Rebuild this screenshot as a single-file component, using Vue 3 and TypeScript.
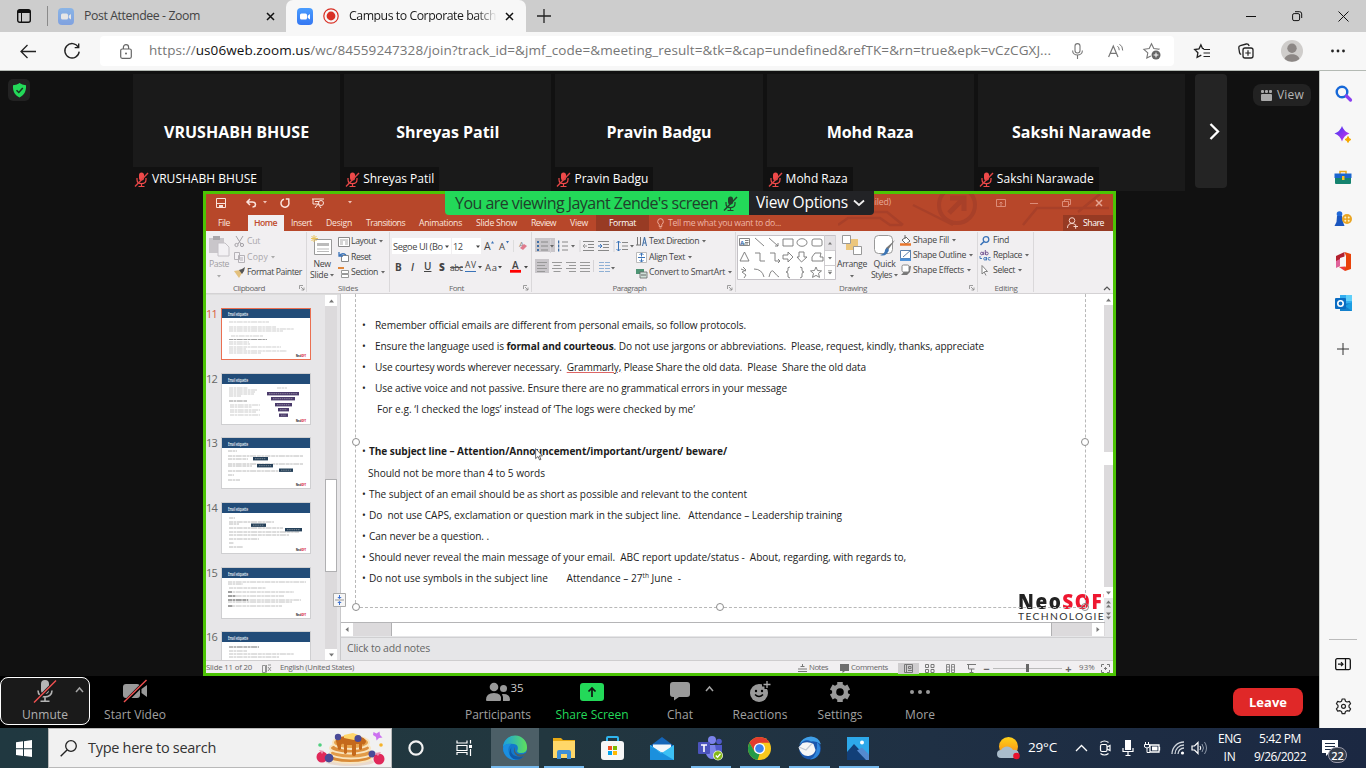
<script setup lang="ts">
import { h } from 'vue'

/* Spreads the characters of a label so that it takes exactly the given width. */
const vFit = {
  mounted(el: HTMLElement, binding: { value: number }) {
    el.style.display = 'inline-block'
    el.style.flex = 'none'
    el.style.whiteSpace = 'pre'
    el.style.width = 'max-content'
    const natural = el.getBoundingClientRect().width
    const count = (el.textContent || '').length || 1
    el.style.letterSpacing = (binding.value - natural) / count + 'px'
    el.style.width = binding.value + 'px'
  },
}

const lines = (rows: number[][], color = '#8d9197', sw = 1) =>
  rows.map(([x, y, w]) => `<path d="M${x} ${y}h${w}" stroke="${color}" stroke-width="${sw}"/>`).join('')

const micOff = (c: string, s: string) =>
  `<g transform="scale(.5)"><rect x="10" y="1" width="10" height="16" rx="5" fill="${c}"/><path d="M6 12v3c0 11 18 11 18 0v-3M15 23v6M9 29h12" fill="none" stroke="${c}" stroke-width="2.4"/><path d="M2 29L28 2" stroke="${s}" stroke-width="2.8"/></g>`

const icons: Record<string, string> = {
  tabs: '<rect x="1.7" y="1.7" width="12.6" height="12.6" rx="2" fill="none" stroke="#111" stroke-width="1.4"/><path d="M2 2h12v3H2z" fill="#111"/><path d="M5.5 4v10" stroke="#111"/>',
  zoomapp: '<defs><linearGradient id="za" x2="0" y2="1"><stop stop-color="#4a9dff"/><stop offset="1" stop-color="#3577f2"/></linearGradient></defs><rect width="16" height="17" rx="4" fill="url(#za)"/><rect x="3" y="5.5" width="7" height="6" rx="1.5" fill="#fff"/><path d="M10.7 7.8L13 6v5.5l-2.3-1.7z" fill="#fff"/>',
  rec: '<circle cx="8" cy="8" r="7.2" fill="none" stroke="#d93025" stroke-width="1.2"/><circle cx="8" cy="8" r="4.4" fill="#d93025"/>',
  x: '<path d="M1 1l7 7M8 1l-7 7" stroke="#111" stroke-width="1.5"/>',
  plus: '<path d="M7 0v14M0 7h14" stroke="#222" stroke-width="1.3"/>',
  min: '<path d="M0 5.5h10" stroke="#111"/>',
  restore: '<rect x=".6" y="2.6" width="7" height="7" rx="1.5" fill="none" stroke="#111"/><path d="M3 .7h4.5q2.2 0 2.2 2.2V7" fill="none" stroke="#111"/>',
  close: '<path d="M.5.5l10 10M10.5.5l-10 10" stroke="#111"/>',
  back: '<path d="M16 7.5H1M7.5 1L1 7.5 7.5 14" fill="none" stroke="#222" stroke-width="1.3"/>',
  reload: '<path d="M14.3 4.2A7.2 7.2 0 1 0 15.2 8.6M14.7.6v4h-4" fill="none" stroke="#222" stroke-width="1.4"/>',
  lock: '<rect x=".7" y="5" width="10.6" height="9.3" rx="1.5" fill="none" stroke="#666" stroke-width="1.2"/><path d="M3.4 5V3.2a2.6 2.6 0 0 1 5.2 0V5" fill="none" stroke="#666" stroke-width="1.2"/><circle cx="6" cy="9.6" r="1" fill="#666"/>',
  mic: '<rect x="3" y=".6" width="5" height="9.4" rx="2.5" fill="none" stroke="#767676" stroke-width="1.1"/><path d="M.6 7.5c0 6 9.8 6 9.8 0M5.500 12v4" fill="none" stroke="#767676" stroke-width="1.1"/>',
  read: '<path d="M.6 14L5.3 3 10 14M2.3 10.4h6" fill="none" stroke="#767676" stroke-width="1.2"/><path d="M9.5 3.2q1.8 1.3 1.7 4M11.5 1.2q3.3 2 3.2 6.3" fill="none" stroke="#767676"/>',
  star: '<path d="M15.5 6.700L16 6.100 10.800 5.600 8.500.800 6.200 5.600.900 6.300l3.900 3.600-1 5.200 4-2.100" fill="none" stroke="#767676" stroke-width="1.100"/><circle cx="13" cy="12" r="4.500" fill="#666"/><path d="M13 9.600v4.800M10.600 12h4.800" stroke="#fff"/>',
  favs: '<path d="M10 4.6l-1.500-.2L6.900.9 5 4.900l-4.300.6L3.900 8.700l-.8 4.700 4.200-2.200" fill="none" stroke="#222" stroke-width="1.3"/><path d="M9.500 5.500H16M9.500 9H16M9.500 12.500H16" stroke="#222" stroke-width="1.2"/>',
  collect: '<rect x="5" y="5" width="10" height="10" rx="2" fill="none" stroke="#222" stroke-width="1.3"/><path d="M10 7.3v5.4M7.3 10h5.4" stroke="#222" stroke-width="1.2"/><path d="M3.2 11.5Q1.8 11 1.5 9.500L.8 4.800Q.6 3 2.300 2.600L8.300 1q2-.4 2.900 2" fill="none" stroke="#222" stroke-width="1.3"/>',
  avatar: '<circle cx="11" cy="11" r="11" fill="#cfcdcb"/><circle cx="11" cy="8.3" r="4.7" fill="#8c8785"/><path d="M3.6 19c1-6.500 14-6.500 14.800 0a11 11 0 0 1-14.800 0" fill="#8c8785"/>',
  dots: '<circle cx="1.5" cy="2" r="1.4" fill="#222"/><circle cx="7" cy="2" r="1.4" fill="#222"/><circle cx="12.5" cy="2" r="1.4" fill="#222"/>',
  shield: '<path d="M6.5 0Q9 2 13 2.3C13.4 8.500 11 12.500 6.500 14.500 2 12.500-.4 8.500 0 2.300 4 2 6.500 0 6.500 0" fill="#23d959"/><path d="M3.5 7.2l2.3 2.3L9.8 5" fill="none" stroke="#17331f" stroke-width="1.5"/>',
  view: '<g fill="#a9a9a9"><rect y="0" width="3" height="3" rx="1"/><rect x="4" width="3" height="3" rx="1"/><rect x="8" width="3" height="3" rx="1"/><rect y="4" width="11" height="7" rx="1"/></g>',
  next: '<path d="M1.5 1l7.500 7.500L1.500 16" fill="none" stroke="#fff" stroke-width="2.3"/>',
  micred: micOff('#f04a4a', '#e04545'),
  micgreen: micOff('#24402c', '#24402c'),
  chev: '<path d="M1 1.500l5 4.500 5-4.500" fill="none" stroke="#eee" stroke-width="1.8"/>',
  /* Edge sidebar */
  search: '<circle cx="7" cy="7" r="5.3" fill="none" stroke="#1668d8" stroke-width="2.4"/><path d="M11.500 11l4 4" stroke="#8a3ff0" stroke-width="3.2" stroke-linecap="round"/>',
  spark: '<defs><linearGradient id="sp" x2="1" y2="1"><stop stop-color="#3b3bf0"/><stop offset="1" stop-color="#d733f0"/></linearGradient></defs><path d="M8 0q1.700 5.300 7.500 7.500Q9.700 9.700 8 15.500 6.300 9.700.500 7.500 6.300 5.300 8 0" fill="url(#sp)"/><path d="M14 10.500q.7 2.700 3 3-2.300.7-3 3-.7-2.300-3-3 2.300-.3 3-3" fill="#f5a900" stroke="#f5a900"/>',
  tools: '<path d="M6 4V1.500h6V4" fill="none" stroke="#e5a71c" stroke-width="1.5"/><rect x="1" y="6" width="16" height="8" rx="1" fill="#15836f"/><path d="M.5 3.500h17V8H.5z" fill="#1a65cf"/><path d="M8 6h2.500v4H8z" fill="#f6c326"/>',
  games: '<circle cx="5.5" cy="3" r="2.8" fill="#2168d8"/><path d="M3 5h5l1 6 1.500 4H.5L2.500 11z" fill="#1a56bf"/><circle cx="13" cy="8" r="5" fill="#e9a524"/><g fill="#fff3c4"><circle cx="11.3" cy="6.5" r="1"/><circle cx="14.7" cy="6.5" r="1"/><circle cx="11.3" cy="9.7" r="1"/><circle cx="14.7" cy="9.7" r="1"/></g>',
  office: '<path d="M9.5 0L16 2v15l-6 2v-3.500L11 14V4z" fill="#e8430a"/><path d="M9.5 0v4.500L5 6v8L1 15V4z" fill="#b3202e"/><path d="M1 9l4-2v7l-4 2z" fill="#e0629a"/><path d="M4 15l6-.5V19z" fill="#ed3a3a"/>',
  outlook: '<path d="M5 0h12v16H5z" fill="#33aef0"/><path d="M11 0h6v6h-6z" fill="#5fd0fa"/><path d="M5 9l12-1v8H5z" fill="#1380cc"/><path d="M10 11l7-4v9z" fill="#1b9de2"/><rect y="3" width="11" height="11" rx="1" fill="#0a6cc2"/><circle cx="5.5" cy="8.5" r="2.7" fill="none" stroke="#fff" stroke-width="1.6"/>',
  plus2: '<path d="M6 0v12M0 6h12" stroke="#333"/>',
  panel: '<rect x=".7" y=".7" width="14.6" height="11" rx="1.5" fill="none" stroke="#111" stroke-width="1.3"/><path d="M10.500 1v11M3 6.200h5M6 4.200l2 2-2 2" fill="none" stroke="#111" stroke-width="1.2"/>',
  gear: '<path d="M7.2 1h2.600l.7 2.200 1.500.8 2.300-.6 1.300 2.300L14 7.400v1.800l1.600 1.700-1.300 2.300-2.300-.5-1.500.8-.7 2.200H7.200l-.7-2.200-1.500-.8-2.300.5-1.300-2.300L3 9.200V7.400L1.400 5.700l1.300-2.300 2.300.6 1.500-.8z" fill="none" stroke="#222" stroke-width="1.2" stroke-linejoin="round"/><circle cx="8.5" cy="8.3" r="2" fill="none" stroke="#222" stroke-width="1.2"/>',
  /* PowerPoint */
  save: '<path d="M.5.5h9v9h-9z" fill="none" stroke="#fbe3dc"/><path d="M1 5.500h8" stroke="#fbe3dc"/><path d="M3 7h4v3H3z" fill="#fbe3dc"/>',
  undo: '<path d="M4 1L1 4l3 3M1 4h5.500q3 0 3 2.500T6.500 9" fill="none" stroke="#fbe3dc" stroke-width="1.5"/>',
  redo: '<path d="M4 1.300A4 4 0 1 0 8.800 4V.500M9.300 1H5.800" fill="none" stroke="#fbe3dc" stroke-width="1.5"/>',
  present: '<path d="M0 1h12M1 1v5h6M6 6l-3 4M6 6l3 4M3 3.500h4" fill="none" stroke="#fbe3dc"/><circle cx="9" cy="5" r="2.5" fill="none" stroke="#fbe3dc"/>',
  caretw: '<path d="M0 0h4L2 2.500z" fill="#f0c3b7"/>',
  caret: '<path d="M0 0h4L2 2.500z" fill="#666"/>',
  caretl: '<path d="M0 0h4L2 2.500z" fill="#aaa"/>',
  circuit: '<g fill="none" stroke="#a84029" stroke-width="3"><circle cx="119" cy="11" r="18" stroke-width="4"/><path d="M111 19l15-15M112 4h14v13" stroke-width="5"/><path d="M0 31l10-7h32l10 7h12M25 18h24l16 13M75 11l40 20M185 31l14-17h72M240 18l22-18" stroke-width="2.500"/></g>',
  ribbonopt: '<path d="M.5.5h9v7h-9zM5 7V3M3.500 4.500L5 3l1.500 1.500" fill="none" stroke="#dc8c78"/>',
  wmin: '<path d="M0 4.500h8" stroke="#dc8c78"/>',
  wres: '<path d="M.5 2.500h6v5h-6zM2.500 2V.5h6v5H7" fill="none" stroke="#dc8c78"/>',
  wclose: '<path d="M1 1l6 6M7 1L1 7" stroke="#e5a594" stroke-width="1.5"/>',
  bulb: '<path d="M2.200 6.500Q.5 5 .7 3.500a2.800 2.800 0 0 1 5.600 0Q6.500 5 4.800 6.500v2H2.200zM2.500 10h2" fill="none" stroke="#f0b3a4" stroke-width=".9"/>',
  person: '<circle cx="5" cy="3.5" r="2.8" fill="none" stroke="#f5d5cc"/><path d="M.5 11q0-4.500 4.500-4.500 2 0 3 1M6.500 9.500H11M8.700 7.300v4.500" fill="none" stroke="#f5d5cc"/>',
  paste: '<path d="M1 3h15v15H1z" fill="#c9c6ca"/><path d="M5 1h7v4H5z" fill="#aaa7ab"/><path d="M10 8h7l4 4v9H10z" fill="#f3f1f4" stroke="#c4c1c6"/>',
  cut: '<path d="M2 0l5 8M9 0L4 8" stroke="#a5a2a7"/><circle cx="2.5" cy="9" r="1.6" fill="none" stroke="#a5a2a7"/><circle cx="8" cy="9" r="1.6" fill="none" stroke="#a5a2a7"/>',
  copy: '<path d="M.5.5h5v7h-5zM4.500 3.500h6v7h-6z" fill="#f3f1f4" stroke="#b5b2b7"/><path d="M6 6h3M6 8h3" stroke="#b5b2b7"/>',
  painter: '<path d="M0 4l6-1 2 3-3 5z" fill="#e3c07d"/><path d="M5 3l3 4 2-3L11 0 8 2z" fill="#555"/>',
  newslide: '<path d="M3.500 4.500h17v15h-17z" fill="#fff" stroke="#999"/><path d="M6 8h12v3H6z" fill="#bbb"/><path d="M6 14h12M6 16.500h12" stroke="#bbb"/><path d="M3 0v7M0 3.500h7M.5 1l5 5M5.500 1l-5 5" stroke="#e9c25c"/>',
  layout: '<path d="M.5.5h11v9H.5z" fill="#fff" stroke="#888"/><path d="M2 3h8M2 5h3M7 5h3M2 7h3M7 7h3" stroke="#aaa"/>',
  reset: '<path d="M3.500 3.500h7v6h-7z" fill="#fff" stroke="#888"/><path d="M1 0v4h4M1 4Q4 0 8 3" fill="none" stroke="#3a73b8" stroke-width="1.3"/>',
  section: '<path d="M0 1h6" stroke="#e0873b" stroke-width="2"/><path d="M3.500 3.500h7v3h-7zM3.500 7.500h7v3h-7z" fill="#fff" stroke="#999"/>',
  launch: '<path d="M.5 4V.5H4M2 2l3 3M5 2.500V5H2.500" fill="none" stroke="#888" stroke-width=".8"/>',
  textdir: '<path d="M1.500 1v8M4.500 1v8M0 9h5" stroke="#777"/><path d="M6.500 10l2-9 2 9M7.500 7h2" fill="none" stroke="#4673a8" stroke-width="1.1"/>',
  aligntext: '<path d="M.5.5h10v10H.5z" fill="#fff" stroke="#bbb"/><path d="M5.500 1v3.500M5.500 6.500V10M3.500 3l2-2 2 2M3.500 8l2 2 2-2M2 5.500h7" fill="none" stroke="#3a73b8"/>',
  smart: '<path d="M0 1h8v5H0z" fill="#4e9474"/><path d="M4 4h7v6H4z" fill="#cfe0d8" stroke="#666" stroke-width=".8"/><path d="M5 7h5" stroke="#666"/>',
  arrange: '<path d="M9 4h7v7h-4v4H4V9h5z" fill="#ecc67c"/><path d="M.5.500h8v8h-8zM11.500 11.500h8v8h-8z" fill="#fff" stroke="#999"/>',
  quick: '<rect x=".5" y=".5" width="18" height="18" rx="4" fill="#fff" stroke="#999"/><path d="M21 5l-7 10-3 1 1-3z" fill="#777"/><path d="M13 13q3 1 1 4-3 5-8 3 5-1 5-5z" fill="#3c75b5"/>',
  fill: '<path d="M5 0v4M2 5l4-3 4 4-4 3z" fill="#fff" stroke="#666"/><path d="M0 9.500h11" stroke="#e8772e" stroke-width="2.5"/>',
  outline: '<path d="M.5.5h10v8H.5zM3 7l8-7" fill="#fff" stroke="#5a80ad"/><path d="M0 9.700h11" stroke="#4a90d9" stroke-width="2.5"/>',
  effects: '<path d="M3 8L4 2l7-1-1 6-3 3H1z" fill="#777"/><rect x="2" y="0" width="7" height="7" rx="1.5" fill="#fff" stroke="#888"/>',
  find: '<circle cx="6" cy="3.5" r="2.8" fill="none" stroke="#3a73b8" stroke-width="1.3"/><path d="M4 5.500L.5 9" stroke="#3a73b8" stroke-width="1.6"/>',
  replace: '<g fill="none" stroke-width=".9"><g stroke="#6b4a8a"><circle cx="1.800" cy="3.500" r="1.300"/><path d="M3.300 1.800V5M5.300 0v5"/><circle cx="6.800" cy="3.500" r="1.400"/></g><g stroke="#3a73b8"><circle cx="5" cy="8.800" r="1.300"/><path d="M6.500 7v3.400M10.500 7.500q-2.500-.500-2.500 1.300t2.500 1.300M0 6v2.500h2"/></g></g>',
  select: '<path d="M2 .5v8.500l2.200-2L6 10.500M2 .5l5.500 6H4.500" fill="#fff" stroke="#777" stroke-width=".9"/>',
  up: '<path d="M0 3.500h5L2.500.5z" fill="#777"/>',
  down: '<path d="M0 .5h5L2.500 3.500z" fill="#777"/>',
  left: '<path d="M3.500 0v5L.5 2.500z" fill="#777"/>',
  right: '<path d="M.5 0v5l3-2.500z" fill="#777"/>',
  pgup: '<path d="M0 3.500h5L2.500.5zM0 7.500h5L2.500 4.500z" fill="#777"/>',
  pgdn: '<path d="M0 .5h5L2.500 3.500zM0 4.500h5L2.500 7.500z" fill="#777"/>',
  collapse: '<path d="M0 4l3-3 3 3" fill="none" stroke="#555" stroke-width="1.2"/>',
  split: '<path d="M.5.5h12v13H.5z" fill="#f6f6f6" stroke="#aaa"/><path d="M2 7h9" stroke="#999"/><path d="M6.500 2v3M6.500 12V9" stroke="#3a6fd0"/><path d="M4.300 4h4.400L6.500 6zM4.300 10h4.400L6.500 8z" fill="#3a6fd0"/>',
  pointer: '<path d="M.6.6v10l2.400-2.100L4.600 12l1.300-.6-1.500-3.500h3.100z" fill="#fff" stroke="#444" stroke-width=".8"/>',
  spell: '<path d="M.5 1.500h3v7h-3zM4.500 8.500V1M6 3l3 4M9 3L6 7M6 1h3" fill="none" stroke="#888" stroke-width=".9"/>',
  notes: '<path d="M0 7.500h9M0 5h9M2.500 2.500h4M4.500 0v2" stroke="#777"/>',
  comment: '<path d="M0 0h9v7H5L2.500 9V7H0z" fill="#6f6f6f"/>',
  normal: '<path d="M.5.5h8v8h-8zM2.500 1v8M4.500 2.500h2.500v2H4.500zM4 6.500h4" fill="none" stroke="#777"/>',
  sorter: '<path d="M.5.5h3v3h-3zM6 .5h3v3H6zM.5 5.500h3v3h-3zM6 5.500h3v3H6z" fill="none" stroke="#777"/>',
  reading: '<path d="M.5.5h3v8h-3zM5.500.5h3v8h-3zM1 3h3M5 3h3M1 6h3M5 6h3" fill="none" stroke="#888"/>',
  show: '<path d="M0 .5h9M1.500 1v4h6M4.500 5v3.500M2.500 8.500h4" fill="none" stroke="#777"/>',
  fitwin: '<path d="M.5 3V.5H3M6 .5h2.500V3M8.500 6v2.500H6M3 8.500H.5V6M3 4.500h3M4.500 3v3" fill="none" stroke="#777"/>',
  fontrows:
    '<g font-family="Open Sans" fill="#444"><rect x="2" y="7" width="59" height="16" fill="#fff"/><rect x="62" y="7" width="29" height="16" fill="#fff"/>' +
    '<text x="3" y="18.6" font-size="9.2" textLength="50">Segoe UI (Bo</text><path d="M55 14.500h4l-2 2.500zM86 14.500h4l-2 2.500z"/><text x="63" y="18.6" font-size="9.2" textLength="10">12</text>' +
    '<text x="94" y="19" font-size="10.5">A</text><path d="M101 12.500l1.500-2.500 1.500 2.500z" fill="#3a73b8"/><text x="109" y="19" font-size="9.5">A</text><path d="M116 10h3l-1.500 2.500z" fill="#3a73b8"/><path d="M123.500 9v12" stroke="#ddd"/><text x="129" y="16" font-size="8" fill="#888">A</text><path d="M130 17l4-4 3 2-4 4z" fill="#e07a8c"/>' +
    '<text x="5" y="39.5" font-size="10" font-weight="700">B</text><text x="21" y="39.5" font-size="10" font-style="italic" font-weight="600">I</text><text x="34" y="39" font-size="10" text-decoration="underline" font-weight="600">U</text><text x="49" y="39.5" font-size="10" font-weight="800">S</text><text x="60" y="39.5" font-size="8.5" textLength="13" text-decoration="line-through">abc</text><text x="75" y="37" font-size="8.5" textLength="11">AV</text><path d="M75 40.500h11" stroke="#3a73b8"/><path d="M88 35h4l-2 2.500z"/><text x="95" y="39.5" font-size="9.5" textLength="12">Aa</text><path d="M108 35h4l-2 2.500z"/><text x="122" y="38" font-size="10" font-weight="600">A</text><path d="M120 40.300h11" stroke="#f00" stroke-width="2.8"/><path d="M134 35h4l-2 2.500z"/></g>',
  pararows:
    '<path d="M3 7h20v14H3zM3 28h14v14H3z" fill="#c9c6ca"/><path d="M18.500 8v14M48 9v12M82 9v12M61.500 29v12" stroke="#d5d3d6"/>' +
    '<g fill="#3f6ea6"><path d="M5 10h2v2H5zM5 14h2v2H5zM5 18h2v2H5zM26 9.500h1.300v3H26zM26 13.500h1.300v3H26zM26 17.500h1.300v3H26z"/></g>' +
    lines([[9, 11, 7], [9, 15, 7], [9, 19, 7], [30, 11, 6], [30, 15, 6], [30, 19, 6], [51, 10.5, 11], [56, 13.5, 6], [56, 16.5, 6], [51, 19.5, 11], [66, 10.5, 11], [71, 13.5, 6], [71, 16.5, 6], [66, 19.5, 11], [90, 11.5, 6], [90, 15, 6], [90, 18.5, 6]], '#888') +
    '<path d="M55 15h-4M53 13l-2 2 2 2" fill="none" stroke="#999"/><path d="M66 15h4M68 13l2 2-2 2M86.500 10v10M84.500 12l2-2 2 2M84.500 18l2 2 2-2" fill="none" stroke="#3a73b8"/>' +
    '<g fill="#666"><path d="M18 14h4l-2 2.500zM39 14h4l-2 2.500zM98 14h4l-2 2.500zM79 36h4l-2 2.500z"/></g>' +
    [31.5, 34.5, 37.5, 40.5].map((y, i) => lines([[5, y, i % 2 ? 8 : 10], [i % 2 ? 21.5 : 20, y, i % 2 ? 7 : 10], [i % 2 ? 37 : 34, y, i % 2 ? 7 : 10], [48, y, 10]], '#999') + lines([[67, y, 5], [73, y, 5]], '#8fb0d4')).join(''),
  shapes:
    '<path d="M.5.5h98v44h-98z" fill="#fff" stroke="#c4c1c6"/><path d="M88 1h10.500v14H88z" fill="#e4e2e5"/><path d="M87.500 0v45M87.500 15.500h11M87.500 30.500h11" stroke="#cfcdd0"/><g fill="#777"><path d="M91 9.500h4l-2-2.500zM91 22h4l-2 2.500zM91 37h4l-2 2.500zM91 35.500h4v.8h-4z"/></g>' +
    '<g fill="none" stroke="#777" stroke-width=".9"><path d="M2.500 3.500h10v7h-10zM8 5.500h3.500M8 7.500h3.500M4 9h7M18 3l9 8M32 3l9 8M41 8v3h-3M46 4h10v7H46zM75 6q0-2 2-2h6q2 0 2 2v4q0 1-2 1h-6q-2 0-2-1zM3 26l4.500-9 4.500 9zM18 18h5v8h5M33 18h5v8h5M41 24l2 2-2 2M46 20h5v-3l5 5-5 5v-3h-5zM62 17h5v5h3l-5.500 5L60 22h2zM75 22l3-4h6l-1 4h3v4H75zM6 32l3 3-4 2 4 3-2 3M4 34l5 2M17 34q8 0 10 8M32 42q2-9 5-5t5 5M53 32q-3 0-2 3 0 2-2 2 2 0 2 2-1 4 2 4M63 32q3 0 2 3 0 2 2 2-2 0-2 2 1 4-2 4M79 32l1.500 3.500 4 .4-3 2.500 1 4-3.500-2-3.500 2 1-4-3-2.500 4-.4z"/><ellipse cx="65" cy="7.5" rx="5" ry="3.8"/></g><text x="3" y="9.5" font-size="6" fill="#3a73b8" font-weight="700">A</text>',
  /* Zoom controls */
  zmic: '<rect x="8" y="0" width="8" height="14" rx="4" fill="#b5b5b5"/><path d="M5 10.500c0 8.500 14 8.500 14 0M12 17v4M7.500 21.300h9" fill="none" stroke="#b5b5b5" stroke-width="1.6"/><path d="M1 23L23 1" stroke="#1a1a1a" stroke-width="3.500"/><path d="M1 22.500L23 .5" stroke="#f05050" stroke-width="1.5"/>',
  zvideo: '<rect y="5" width="17" height="14" rx="3" fill="#999"/><path d="M18.500 10L24 6v12l-5.500-4z" fill="#999"/><path d="M1 24L23 2" stroke="#000" stroke-width="3.500"/><path d="M1 23L23.500 1" stroke="#f05050" stroke-width="1.4"/>',
  zchev: '<path d="M1 5l3.500-4L8 5" fill="none" stroke="#a5a5a5" stroke-width="1.5"/>',
  people: '<g fill="#999"><circle cx="8" cy="5" r="4.3"/><path d="M0 18q0-7 8-7t7 7q0 1-1 1H1q-1 0-1-1"/><circle cx="17.500" cy="6.500" r="3.5"/><path d="M16 12q8-.5 8 5.500 0 1.500-1 1.500h-6q.5-4.500-1-7"/></g>',
  share: '<rect width="24" height="18" rx="3" fill="#23d959"/><path d="M12 14V5M8.500 8.500L12 5l3.500 3.500" fill="none" stroke="#111" stroke-width="1.7"/>',
  chat: '<path d="M3 0h14q3 0 3 3v9q0 3-3 3H9l-5 3.500V15H3q-3 0-3-3V3q0-3 3-3" fill="#999"/>',
  react: '<circle cx="9" cy="12" r="9" fill="#999"/><circle cx="6" cy="10" r="1.2" fill="#000"/><circle cx="12" cy="10" r="1.2" fill="#000"/><path d="M5 13.500q4 4 8 0" fill="none" stroke="#000" stroke-width="1.5"/><path d="M16.500-1v9M12 3.500h9" stroke="#000" stroke-width="4"/><path d="M17 0v7M13.500 3.500h7" stroke="#aaa" stroke-width="1.3"/>',
  zgear: '<circle cx="10" cy="10" r="5.5" fill="none" stroke="#999" stroke-width="5"/><path d="M10 0v20M1.300 5l17.400 10M1.300 15L18.700 5" stroke="#999" stroke-width="5.500"/><circle cx="10" cy="10" r="3.8" fill="#000"/>',
  zmore: '<g fill="#999"><circle cx="2" cy="2" r="2"/><circle cx="10" cy="2" r="2"/><circle cx="18" cy="2" r="2"/></g>',
  /* Taskbar */
  win: '<path d="M0 2.300L7 1.300v6.900H0zM8 1.200L16 0v8.200H8zM0 9.200h7v6.900L0 15zM8 9.200h8V17l-8-1.100z" fill="#fff"/>',
  find2: '<circle cx="11" cy="6" r="5.3" fill="none" stroke="#222" stroke-width="1.3"/><path d="M7 10L.7 16.300" stroke="#222" stroke-width="1.4"/>',
  pancake:
    '<ellipse cx="34" cy="30" rx="24" ry="4" fill="#e9d9cd"/><g stroke="#f9e4bd" stroke-width="2"><ellipse cx="34" cy="25.500" rx="22" ry="5.500" fill="#d98b38"/><ellipse cx="35" cy="21" rx="21" ry="5.500" fill="#e39b48"/><ellipse cx="34" cy="16" rx="20" ry="5.500" fill="#dc8e3c"/><ellipse cx="35" cy="10.500" rx="18" ry="6.500" fill="#e8a54f"/></g><path d="M20 9q0-5 15-5t15 6q-2 4-4 2v5q-1.500 2-3 0v-5h-3v11q-2 2-4 0V13h-5v8q-2 2-3 0v-9q-2-1-3 1v4q-2 2-3 0z" fill="#c4691c"/><path d="M28 3l9-2 8 3-7 4-10-2z" fill="#ffd66b"/><g fill="#4a4a97"><circle cx="22" cy="5" r="3.2"/><circle cx="42" cy="6.500" r="3.5"/><circle cx="56" cy="22" r="3.5"/><circle cx="13" cy="26" r="4.3"/></g><g fill="#e0285a"><circle cx="6" cy="25" r="5.5"/><circle cx="63" cy="27" r="5.5"/></g><g fill="#4a4a97"><circle cx="13" cy="26" r="4.3"/></g><path d="M3 18l5 1-2 3zM59 21l6-1-3 4z" fill="#e98fae"/><path d="M57.500 0l3 1.500 3-2 .5 3.500 2.500 2.500-3.500.5-2.500 2.500-.5-3.500-3-2z" fill="#cc72f0"/><circle cx="4" cy="13" r="1.8" fill="#4fd07f"/><circle cx="65" cy="13" r="1.8" fill="#f5b32a"/>',
  cortana: '<circle cx="8" cy="8" r="6.6" fill="none" stroke="#f2f2f2" stroke-width="2.2"/>',
  taskview: '<path d="M1 .5V3h10V.5M1 15v-2.500h10V15M1 5.500h10v5H1zM14.500 0v3.500M14.500 9v7" fill="none" stroke="#fff" stroke-width="1.2"/><path d="M13 5h3v3h-3z" fill="#fff"/>',
  edge: '<defs><linearGradient id="e1" x2="1"><stop stop-color="#1a9fe0"/><stop offset="1" stop-color="#5fe05a"/></linearGradient></defs><circle cx="12" cy="12" r="12" fill="#1379cc"/><path d="M0 11A12 12 0 0 1 24 12q0 5-6 5-5 0-3.500-3Q16 9 11 8 3 7 0 11" fill="url(#e1)"/><path d="M0 12Q2 7 8 8q-5 5-1 11 3 4 8 4.500A12 12 0 0 1 0 12" fill="#1b8fe0"/><path d="M8.500 11q-2 7 4 9 5 2 9-1-4 6-11 4-7-4-2-12" fill="#0f5aa8"/><path d="M12 11q-1.500 7 5 7.500 3 0 5.500-1.500l1 1-2 2q-6 2-9-1.500T12 11" fill="#4c5f67"/>',
  folder: '<path d="M0 1h8l2 2h12v18H0z" fill="#e8a914"/><path d="M0 4h22v17H0z" fill="#ffd768"/><path d="M4 22v-7q0-2 2-2h10q2 0 2 2v7h-4v-5H8v5z" fill="#3f8fd6"/>',
  store: '<path d="M6 5V2q0-1 1-1h9q1 0 1 1v3" fill="none" stroke="#2fb5ee" stroke-width="2"/><rect y="5" width="23" height="19" rx="3" fill="#f6f6f6"/><path d="M7 10h4v4H7z" fill="#f25022"/><path d="M12 10h4v4h-4z" fill="#7fba00"/><path d="M7 15h4v4H7z" fill="#00a4ef"/><path d="M12 15h4v4h-4z" fill="#ffb900"/>',
  mail: '<path d="M0 9L12 0l12 9v14H0z" fill="#1565b8"/><path d="M3 7.500h18v8H3z" fill="#f2f6fa"/><path d="M0 8l13 8.500L24 8v15H0z" fill="#1b90dd"/><path d="M24 8L11 16.500 0 8v1l13 7.500L24 23z" fill="#3cc0f4"/>',
  teams: '<circle cx="14" cy="4" r="4" fill="#7b83eb"/><circle cx="21" cy="5.500" r="2.8" fill="#5059c9"/><path d="M8 9h12v9q-2 5-6 5t-6-5z" fill="#7b83eb"/><path d="M17 9h7v7q-1 4-5 4z" fill="#5059c9"/><rect y="6" width="12" height="12" rx="1" fill="#4b53bc"/><path d="M3 9h6M6 9v7" stroke="#fff" stroke-width="1.6"/><circle cx="20" cy="19.500" r="5" fill="#e8f3cf"/><circle cx="20" cy="19.500" r="4.2" fill="#84b71a"/><path d="M17.800 19.500l1.700 1.700 3-3.400" fill="none" stroke="#fff" stroke-width="1.3"/>',
  chrome: '<circle cx="11.5" cy="11.5" r="11.5" fill="#f9c81c"/><path d="M1.500 5.800a11.500 11.500 0 0 1 20 0H11.500L6.500 14.400z" fill="#e33b2e"/><path d="M1.500 5.800l5 8.600 5 2.900-2 5.600A11.500 11.500 0 0 1 1.500 5.800" fill="#249a48"/><circle cx="11.5" cy="11.5" r="5.6" fill="#fff"/><circle cx="11.5" cy="11.5" r="4.3" fill="#3d82ee"/>',
  bird: '<circle cx="13" cy="12.500" r="10.800" fill="#1b57ad"/><path d="M2 9Q5 1 14 .5q8 .5 10 8-5-4-10-3Q8 2 2 9" fill="#3f9fe8"/><path d="M20 6q5 5 2 12-3 5-9 5.500 8-4 7-17.500" fill="#2f86dc"/><path d="M1.500 11.500l4-4.500q6-2 11 1l2 6q-1 5-7 6-7 .5-10-8.500" fill="#f6f6f6"/><path d="M2 11l7 3 6-6.500" fill="none" stroke="#c3cad4" stroke-width="1.2"/>',
  photos: '<path d="M0 0h22v23H0z" fill="#2da8ea"/><path d="M0 15L7 7l15 16H0z" fill="#123f78"/><path d="M10 13.500l5-3 7 7V23h-3z" fill="#5489cf"/><circle cx="15" cy="5.500" r="2" fill="#fff"/>',
  weather: '<defs><linearGradient id="su" x2="0" y2="1"><stop stop-color="#ffd21a"/><stop offset="1" stop-color="#f78a17"/></linearGradient></defs><circle cx="11.5" cy="9.5" r="9.5" fill="url(#su)"/><path d="M4 21a4 4 0 0 1 0-8 7 7 0 0 1 12 0q5-1 6 4 0 4-4 4z" fill="#a9bccb"/><circle cx="19.500" cy="19" r="3.3" fill="#e8112d"/>',
  tchev: '<path d="M1 7l5.500-5.500L12 7" fill="none" stroke="#fff" stroke-width="1.3"/>',
  meet: '<rect x="1.500" y="4.500" width="6.500" height="7" rx="1.5" fill="none" stroke="#fff" stroke-width="1.2"/><path d="M8 7l3-1.500v5L8 9M1.500 2.500Q5.500-.5 9.500 2.500M1.500 13.500q4 3 8 0" fill="none" stroke="#fff" stroke-width="1.2"/>',
  tmic: '<path d="M3 0h6v10H3z" fill="#fff"/><path d="M1 8v3.500h10V8M6 12v3.500M3.500 15.500h5" fill="none" stroke="#fff" stroke-width="1.2"/>',
  battery: '<path d="M6 3h9v7H6zM15.500 5v3.500" fill="none" stroke="#fff" stroke-width="1.3"/><path d="M8 4.500h5.500v4H8z" fill="#fff"/><path d="M.5 2.500h5v2.500q-2.500 2-5 0zM1.500 0v2M4.500 0v2M3 6v4.500h3" fill="none" stroke="#fff"/>',
  wifi: '<path d="M1 13A12 12 0 0 1 13 1M4 13a9 9 0 0 1 9-9M7 13a6 6 0 0 1 6-6" fill="none" stroke="#cfd5dc" stroke-width="1.3"/><circle cx="11.500" cy="12" r="1.6" fill="#fff"/>',
  sound: '<path d="M1 5h2.500L7 1.500v11L3.500 9H1z" fill="none" stroke="#fff" stroke-width="1.2"/><path d="M9 5q1.500 2 0 4" fill="none" stroke="#fff" stroke-width="1.2"/><path d="M11 3q3 4 0 8M13.500 1q4 6 0 12" fill="none" stroke="#8d98a8"/>',
  action: '<path d="M0 0h16v13H7l-3 3v-3H0z" fill="#fff"/><path d="M3 3.500h10M3 6.500h10M3 9.500h6" stroke="#1c2c45" stroke-width="1.2"/>',
}

const Icon = (p: { n: string; w: number | string; h: number | string }) =>
  h('svg', { class: 'ic', width: p.w, height: p.h, viewBox: `0 0 ${p.w} ${p.h}`, innerHTML: icons[p.n] })
;(Icon as any).props = ['n', 'w', 'h']

const people = [
  { name: 'VRUSHABH BHUSE', big: 145, small: 105 },
  { name: 'Shreyas Patil', big: 103, small: 71 },
  { name: 'Pravin Badgu', big: 105, small: 74 },
  { name: 'Mohd Raza', big: 87, small: 62 },
  { name: 'Sakshi Narawade', big: 139, small: 97 },
]
const side = [
  ['search', 16, 16], ['spark', 18, 18], ['tools', 18, 15], ['games', 18, 16], ['office', 17, 19], ['outlook', 17, 16],
] as [string, number, number][]
const tabs: [string, number, string][] = [
  ['File', 12, 'file'], ['Home', 23, 'on'], ['Insert', 21, ''], ['Design', 26, ''], ['Transitions', 39, ''], ['Animations', 43, ''],
  ['Slide Show', 41, ''], ['Review', 25, ''], ['View', 18, ''], ['Format', 27, 'ctx'],
]

const header = (y: number) => `<path d="M0 0h88v${y}H0z" fill="#224c78"/><text x="6" y="${y - 2.5}" font-family="Open Sans" font-size="4.5" font-weight="600" fill="#fff" textLength="20" lengthAdjust="spacingAndGlyphs">Email etiquette</text>`
const logo = '<text x="74" y="48" font-family="Open Sans" font-size="3.6" font-weight="800" fill="#333" textLength="10" lengthAdjust="spacingAndGlyphs">Neo<tspan fill="#d8203c">SOFT</tspan></text>'
const bars = (b: number[][], c: string) => b.map(([x, y, w]) => `<path d="M${x} ${y}h${w}v3.4h-${w}z" fill="${c}"/><path d="M${x + 2} ${y + 1.7}h${w - 4}" stroke="#ccc" stroke-width=".5" stroke-dasharray="1.500 .7"/>`).join('')
const thumbs = [
  { no: 11, art: lines([[7, 13, 40], [7, 18, 47], [7, 20, 65], [7, 22, 54], [9, 27, 32], [7, 33, 20], [7, 35, 21], [7, 38, 52], [7, 40, 17], [7, 42, 58], [7, 44, 32]], '#b9b9b9', 0.7) + lines([[7, 30.5, 38]], '#777', 0.7) },
  { no: 12, art: lines([[7, 14, 19], [7, 16, 28], [7, 18, 26], [7, 20, 25], [7, 22, 12], [8, 31, 30], [8, 33, 22], [8, 36, 30], [8, 38, 26], [8, 41, 30], [55, 14, 10]], '#b4b4b4', 0.7) + lines([[7, 27, 18]], '#777', 0.8) + bars([[45, 18, 32], [49, 23, 24], [53, 29, 17], [56, 34, 11], [57, 39.5, 9]], '#4b3b6b') },
  { no: 13, art: lines([[6, 13, 9], [6, 18, 75], [6, 21, 20], [6, 26, 75], [6, 28, 24], [6, 33, 60], [6, 37, 6], [6, 42, 12]], '#a8a8a8', 0.8) + bars([[31, 19, 15], [35, 26, 16], [57, 30.5, 14]], '#254059') },
  { no: 14, art: lines([[7, 15, 6], [7, 19, 45], [7, 21, 10], [7, 25, 54], [7, 29, 70], [7, 32, 60], [7, 36, 30], [7, 40, 5], [7, 44, 14]], '#a8a8a8', 0.8) + bars([[29, 20.5, 15], [63, 25, 17]], '#254059') },
  { no: 15, art: lines([[6, 14, 78], [6, 16, 15], [7, 20, 37], [6, 24, 66], [6, 28, 56], [6, 32, 73], [6, 34, 64], [6, 38, 54]], '#b0b0b0', 0.8) + lines([[6, 24, 4], [6, 28, 8], [6, 32, 20], [6, 38, 5]], '#555', 0.9) },
  { no: 16, art: lines([[7, 15, 30]], '#666', 0.9) + lines([[7, 19, 18], [7, 22, 65], [7, 25, 50]], '#b0b0b0', 0.8) },
]
thumbs.forEach((t) => {
  icons['t' + t.no] = header(t.no === 11 ? 9 : 10) + `<g stroke-dasharray="4 .6 2.5 .6 6 .7">${t.art}</g>` + (t.no === 16 ? '' : logo)
})

const body: { w: number; dot: boolean; cls: string; html: string }[] = [
  { w: 371, dot: true, cls: 'a', html: 'Remember official emails are different from personal emails, so follow protocols.' },
  { w: 609, dot: true, cls: 'a', html: 'Ensure the language used is <b>formal and courteous</b>. Do not use jargons or abbreviations.  Please, request, kindly, thanks, appreciate' },
  { w: 491, dot: true, cls: 'a', html: 'Use courtesy words wherever necessary.  <u>Grammarly,</u> Please Share the old data.  Please  Share the old data' },
  { w: 412, dot: true, cls: 'a', html: 'Use active voice and not passive. Ensure there are no grammatical errors in your message' },
  { w: 318, dot: false, cls: 'eg', html: 'For e.g. ‘I checked the logs’ instead of ‘The logs were checked by me’' },
  { w: 0, dot: false, cls: 'a', html: '' },
  { w: 358, dot: true, cls: 'b', html: '<b>The subject line – Attention/Announcement/important/urgent/ beware/</b>' },
  { w: 177, dot: false, cls: 'c', html: 'Should not be more than 4 to 5 words' },
  { w: 378, dot: true, cls: 'b', html: 'The subject of an email should be as short as possible and relevant to the content' },
  { w: 473, dot: true, cls: 'b', html: 'Do  not use CAPS, exclamation or question mark in the subject line.   Attendance – Leadership training' },
  { w: 120, dot: true, cls: 'b', html: 'Can never be a question. .' },
  { w: 537, dot: true, cls: 'b', html: 'Should never reveal the main message of your email.  ABC report update/status -  About, regarding, with regards to,' },
  { w: 312, dot: true, cls: 'b', html: 'Do not use symbols in the subject line       Attendance – 27<sup>th</sup> June  -' },
]
const handles = ['h1', 'h2', 'h3', 'h4', 'h5']
const apps: [string, number, number, string][] = [
  ['edge', 24, 24, 'run active'], ['folder', 22, 22, 'run'], ['store', 23, 24, ''], ['mail', 24, 23, ''],
  ['teams', 25, 25, 'run'], ['chrome', 23, 23, 'run'], ['bird', 25, 24, 'run'], ['photos', 22, 23, 'run'],
]
</script>

<template>
  <div class="screen">
    <header class="strip">
      <Icon n="tabs" w="16" h="16" class="ws" />
      <div class="tab old"><Icon n="zoomapp" w="16" h="17" class="dim" /><span v-fit="116" class="tt">Post Attendee - Zoom</span><Icon n="x" w="9" h="9" /></div>
      <div class="tab cur"><Icon n="zoomapp" w="16" h="17" /><Icon n="rec" w="16" h="16" /><span class="cut"><span v-fit="147" class="tt">Campus to Corporate batch</span></span><Icon n="x" w="9" h="9" /></div>
      <Icon n="plus" w="14" h="14" class="newtab" />
      <div class="winbtns"><Icon n="min" w="10" h="10" /><Icon n="restore" w="10" h="10" /><Icon n="close" w="11" h="11" /></div>
    </header>

    <nav class="bar">
      <Icon n="back" w="16" h="15" /><Icon n="reload" w="16" h="16" class="rl" />
      <div class="addr">
        <Icon n="lock" w="12" h="15" />
        <span v-fit="902" class="url">https://<b>us06web.zoom.us</b>/wc/84559247328/join?track_id=&amp;jmf_code=&amp;meeting_result=&amp;tk=&amp;cap=undefined&amp;refTK=&amp;rn=true&amp;epk=vCzCGXJ...</span>
        <div class="addricons"><Icon n="mic" w="11" h="16" /><Icon n="read" w="15" h="16" /><Icon n="star" w="18" h="17" /></div>
      </div>
      <div class="baricons"><Icon n="favs" w="17" h="15" /><Icon n="collect" w="16" h="16" /><Icon n="avatar" w="22" h="22" /><Icon n="dots" w="14" h="4" /></div>
    </nav>

    <div class="middle">
      <main class="zoom">
        <section class="gallery">
          <div class="gl"><div class="shield"><Icon n="shield" w="13" h="15" /></div></div>
          <div class="tiles">
            <div v-for="p in people" :key="p.name" class="tile">
              <div class="big"><span v-fit="p.big">{{ p.name }}</span></div>
              <div class="small"><Icon n="micred" w="15" h="15" /><span v-fit="p.small">{{ p.name }}</span></div>
            </div>
          </div>
          <div class="nextbtn"><Icon n="next" w="11" h="17" /></div>
          <div class="viewbtn"><Icon n="view" w="12" h="11" /><span v-fit="27">View</span></div>
        </section>

        <section class="share">
          <div class="banner">
            <div class="viewing"><span v-fit="263">You are viewing Jayant Zende's screen</span><Icon n="micgreen" w="15" h="15" /></div>
            <div class="opts"><span v-fit="92">View Options</span><Icon n="chev" w="12" h="8" /></div>
          </div>

          <div class="phead">
            <div class="circuit"><Icon n="circuit" w="275" h="37" /></div>
            <div class="ptitle">
              <Icon n="save" w="10" h="10" /><Icon n="undo" w="11" h="10" class="q1" /><Icon n="caretw" w="4" h="3" class="q2" /><Icon n="redo" w="10" h="10" class="q3" /><Icon n="present" w="12" h="10" class="q4" /><Icon n="caretw" w="4" h="3" class="q5" />
              <span v-fit="21" class="failed">ailed)</span>
              <div class="pwin"><Icon n="ribbonopt" w="10" h="8" /><Icon n="wmin" w="8" h="8" /><Icon n="wres" w="9" h="8" /><Icon n="wclose" w="8" h="8" /></div>
            </div>
            <div class="ptabs">
              <div v-for="t in tabs" :key="t[0]" class="ptab" :class="t[2]"><span v-fit="t[1]">{{ t[0] }}</span></div>
              <Icon n="bulb" w="7" h="11" class="bulb" /><span v-fit="113" class="tell">Tell me what you want to do...</span>
              <div class="pshare"><Icon n="person" w="11" h="12" /><span v-fit="21">Share</span></div>
            </div>
          </div>

          <div class="ribbon">
            <div class="group g1">
              <div class="gb">
                <div class="bigcmd pst"><Icon n="paste" w="22" h="22" /><span v-fit="20">Paste</span><Icon n="caretl" w="4" h="3" class="bc" /></div>
                <div class="cmds">
                  <p class="off"><Icon n="cut" w="12" h="11" /><span v-fit="13">Cut</span></p>
                  <p class="off"><Icon n="copy" w="12" h="11" /><span v-fit="21">Copy</span><Icon n="caretl" w="4" h="3" /></p>
                  <p><Icon n="painter" w="12" h="11" /><span v-fit="55">Format Painter</span></p>
                </div>
              </div>
              <div class="gn"><span v-fit="32">Clipboard</span><Icon n="launch" w="6" h="6" /></div>
            </div>
            <div class="group g2">
              <div class="gb">
                <div class="bigcmd"><Icon n="newslide" w="22" h="22" /><span v-fit="17">New</span><em><span v-fit="18">Slide</span><Icon n="caret" w="4" h="3" /></em></div>
                <div class="cmds">
                  <p><Icon n="layout" w="12" h="10" /><span v-fit="25">Layout</span><Icon n="caret" w="4" h="3" /></p>
                  <p><Icon n="reset" w="12" h="10" /><span v-fit="20">Reset</span></p>
                  <p><Icon n="section" w="12" h="11" /><span v-fit="27">Section</span><Icon n="caret" w="4" h="3" /></p>
                </div>
              </div>
              <div class="gn"><span v-fit="20">Slides</span></div>
            </div>
            <div class="group g3"><div class="gb"><Icon n="fontrows" w="140" h="51" class="up1" /></div><div class="gn"><span v-fit="15">Font</span><Icon n="launch" w="6" h="6" /></div></div>
            <div class="group g4">
              <div class="gb">
                <Icon n="pararows" w="104" h="51" class="up1" />
                <div class="cmds">
                  <p><Icon n="textdir" w="12" h="11" /><span v-fit="50">Text Direction</span><Icon n="caret" w="4" h="3" /></p>
                  <p><Icon n="aligntext" w="12" h="11" /><span v-fit="36">Align Text</span><Icon n="caret" w="4" h="3" /></p>
                  <p><Icon n="smart" w="12" h="10" /><span v-fit="76">Convert to SmartArt</span><Icon n="caret" w="4" h="3" /></p>
                </div>
              </div>
              <div class="gn"><span v-fit="34">Paragraph</span><Icon n="launch" w="6" h="6" /></div>
            </div>
            <div class="group g5">
              <div class="gb">
                <Icon n="shapes" w="99" h="45" class="shapes" />
                <div class="bigcmd"><Icon n="arrange" w="20" h="22" /><span v-fit="30">Arrange</span><Icon n="caret" w="4" h="3" class="bc" /></div>
                <div class="bigcmd qk"><Icon n="quick" w="22" h="22" /><span v-fit="22">Quick</span><em><span v-fit="21">Styles</span><Icon n="caret" w="4" h="3" /></em></div>
                <div class="cmds tight">
                  <p><Icon n="fill" w="12" h="11" /><span v-fit="36">Shape Fill</span><Icon n="caret" w="4" h="3" /></p>
                  <p><Icon n="outline" w="12" h="11" /><span v-fit="53">Shape Outline</span><Icon n="caret" w="4" h="3" /></p>
                  <p><Icon n="effects" w="12" h="11" /><span v-fit="51">Shape Effects</span><Icon n="caret" w="4" h="3" /></p>
                </div>
              </div>
              <div class="gn"><span v-fit="28">Drawing</span><Icon n="launch" w="6" h="6" /></div>
            </div>
            <div class="group g6">
              <div class="gb">
                <div class="cmds tight">
                  <p><Icon n="find" w="12" h="10" /><span v-fit="16">Find</span></p>
                  <p><Icon n="replace" w="12" h="11" /><span v-fit="29">Replace</span><Icon n="caret" w="4" h="3" /></p>
                  <p><Icon n="select" w="12" h="11" /><span v-fit="22">Select</span><Icon n="caret" w="4" h="3" /></p>
                </div>
              </div>
              <div class="gn"><span v-fit="23">Editing</span></div>
            </div>
            <Icon n="collapse" w="6" h="5" class="collapse" />
          </div>

          <div class="work">
            <aside class="panel">
              <div class="thumbs">
                <div v-for="t in thumbs" :key="t.no" class="thumb" :class="{ sel: t.no === 11 }"><span v-fit="11">{{ t.no }}</span><Icon :n="'t' + t.no" w="88" h="50" /></div>
              </div>
              <div class="vbar"><i class="btn"><Icon n="up" w="5" h="4" /></i><i class="knob" /><i class="btn"><Icon n="down" w="5" h="4" /></i></div>
              <Icon n="split" w="13" h="14" class="split" />
            </aside>
            <div class="editor">
              <div class="canvasrow">
                <div class="slide">
                  <div class="text">
                    <p v-for="(l, i) in body" :key="i" :class="l.cls"><i>{{ l.dot ? '•' : '' }}</i><span v-if="l.w" v-fit="l.w" v-html="l.html" /></p>
                  </div>
                  <div class="logo"><strong v-fit="98">Neo<b>SOFT</b></strong><span v-fit="94">TECHNOLOGIES</span></div>
                  <div class="frame"><i v-for="k in handles" :key="k" :class="k" /></div>
                  <Icon n="pointer" w="9" h="13" class="pointer" />
                </div>
                <div class="rbar"><i class="btn"><Icon n="up" w="5" h="4" /></i><i class="knob" /><i class="btn"><Icon n="down" w="5" h="4" /></i><i class="btn pg"><Icon n="pgup" w="5" h="8" /></i><i class="btn pg"><Icon n="pgdn" w="5" h="8" /></i></div>
              </div>
              <div class="hbar"><i class="btn"><Icon n="left" w="4" h="5" /></i><i class="knob" /><i class="btn"><Icon n="right" w="4" h="5" /></i></div>
              <div class="notes"><span v-fit="83">Click to add notes</span></div>
            </div>
          </div>
          <footer class="status">
            <span v-fit="46">Slide 11 of 20</span><Icon n="spell" w="10" h="9" class="s1" /><span v-fit="74" class="s2">English (United States)</span>
            <div class="sright">
              <Icon n="notes" w="9" h="8" /><span v-fit="19">Notes</span><Icon n="comment" w="9" h="9" class="s3" /><span v-fit="37">Comments</span>
              <div class="views"><i class="on"><Icon n="normal" w="9" h="9" /></i><i><Icon n="sorter" w="10" h="9" /></i><i><Icon n="reading" w="9" h="9" /></i><i><Icon n="show" w="9" h="9" /></i></div>
              <div class="zoomer"><b>−</b><i class="track"><i /></i><b>+</b></div><span v-fit="16" class="pct">93%</span><Icon n="fitwin" w="9" h="9" class="fw" />
            </div>
          </footer>
        </section>

        <section class="controls">
          <div class="ctl mute"><Icon n="zmic" w="24" h="24" /><span v-fit="46">Unmute</span><Icon n="zchev" w="9" h="6" class="cv" /></div>
          <div class="ctl c2"><Icon n="zvideo" w="25" h="24" /><span v-fit="62">Start Video</span></div>
          <div class="ctl c3"><div class="pp"><Icon n="people" w="24" h="19" /><b>35</b></div><span v-fit="66">Participants</span></div>
          <div class="ctl c4"><Icon n="share" w="24" h="18" /><span v-fit="73">Share Screen</span></div>
          <div class="ctl c5"><Icon n="chat" w="20" h="19" /><span v-fit="26">Chat</span><Icon n="zchev" w="9" h="6" class="cv" /></div>
          <div class="ctl c6"><Icon n="react" w="21" h="21" /><span v-fit="55">Reactions</span></div>
          <div class="ctl c7"><Icon n="zgear" w="20" h="20" /><span v-fit="45">Settings</span></div>
          <div class="ctl c8"><Icon n="zmore" w="20" h="4" /><span v-fit="30">More</span></div>
          <button class="leave"><span v-fit="38">Leave</span></button>
        </section>
      </main>

      <aside class="side">
        <div v-for="s in side" :key="s[0]" class="sic"><Icon :n="s[0]" :w="s[1]" :h="s[2]" /></div>
        <div class="sic add"><Icon n="plus2" w="12" h="12" /></div>
        <div class="sfoot"><div class="sic"><Icon n="panel" w="16" h="13" /></div><div class="sic"><Icon n="gear" w="17" h="17" /></div></div>
      </aside>
    </div>

    <footer class="taskbar">
      <div class="start"><Icon n="win" w="16" h="17" /></div>
      <div class="searchbox"><Icon n="find2" w="17" h="17" /><span v-fit="128">Type here to search</span><Icon n="pancake" w="69" h="32" class="cake" /></div>
      <div class="tb"><Icon n="cortana" w="16" h="16" /></div>
      <div class="tb"><Icon n="taskview" w="16" h="16" /></div>
      <div v-for="a in apps" :key="a[0]" class="tb app" :class="a[3]"><Icon :n="a[0]" :w="a[1]" :h="a[2]" /></div>
      <div class="tray">
        <Icon n="weather" w="23" h="23" /><span v-fit="29" class="deg">29°C</span>
        <Icon n="tchev" w="13" h="8" class="t1" /><Icon n="meet" w="12" h="16" class="t2" /><Icon n="tmic" w="12" h="16" class="t3" /><Icon n="battery" w="17" h="12" class="t4" /><Icon n="wifi" w="14" h="14" class="t5" /><Icon n="sound" w="17" h="14" class="t6" />
        <div class="two lang"><span v-fit="23">ENG</span><span v-fit="12">IN</span></div>
        <div class="two time"><span v-fit="42">5:42 PM</span><span v-fit="52">9/26/2022</span></div>
        <div class="act"><Icon n="action" w="16" h="16" /><b>22</b></div>
      </div>
    </footer>
  </div>
</template>

<style>
html, body { margin: 0; overflow: hidden; }
.slide .text b { font-weight: 700; }
.slide .text u { text-decoration-color: #d66; text-decoration-thickness: 1px; }
.slide .text sup { font-size: 6.5px; line-height: 0; }
</style>
<style scoped>
* { box-sizing: border-box; }
.screen { width: 1366px; height: 768px; display: flex; flex-direction: column; font-family: "Open Sans", "Noto Sans", sans-serif; line-height: 1; overflow: hidden; background: #111; }
.ic { display: block; flex: none; overflow: visible; }
p { margin: 0; }
i, em { font-style: normal; }

.strip { height: 32px; flex: none; background: #cdcdcd; display: flex; align-items: center; }
.ws { margin-left: 16px; }
.tab { display: flex; align-items: center; height: 32px; font-size: 12.3px; }
.tab.old { width: 238px; margin-left: 15px; padding: 0 10px 0 10px; border-left: 1px solid #8a8a8a; height: 20px; color: #444; }
.dim { opacity: .5; }
.tab.old .tt { margin: 0 auto 0 10px; }
.tab.cur { width: 240px; margin-left: 1px; background: #f7f7f7; border-radius: 7px 7px 0 0; padding: 0 12px 0 11px; color: #1a1a1a; }
.tab.cur .ic + .ic { margin-left: 10px; }
.cut { margin: 0 auto 0 10px; width: 148px; -webkit-mask-image: linear-gradient(90deg, #000 86%, transparent); mask-image: linear-gradient(90deg, #000 86%, transparent); }
.newtab { margin-left: 11px; }
.winbtns { margin: 0 17px 0 auto; display: flex; gap: 36px; align-items: center; }

.bar { height: 39px; flex: none; background: #f7f7f7; border-bottom: 1px solid #b4bab4; display: flex; align-items: center; padding-left: 20px; }
.rl { margin-left: 28px; }
.addr { width: 1074px; height: 30px; margin-left: 20px; background: #fff; border-radius: 4px; display: flex; align-items: center; padding-left: 20px; }
.url { margin-left: 17px; font-size: 13.5px; color: #767676; }
.url b { font-weight: 400; color: #111; }
.addricons { display: flex; align-items: center; gap: 25px; margin-left: 21px; }
.addricons .ic:last-child { margin-left: -5px; }
.baricons { display: flex; align-items: center; margin-left: 20px; }
.baricons .ic:nth-child(2) { margin-left: 27px; }
.baricons .ic:nth-child(3) { margin-left: 27px; }
.baricons .ic:nth-child(4) { margin-left: 28px; }

.middle { height: 657px; flex: none; display: flex; }
.zoom { width: 1319px; height: 657px; background: #111; display: flex; flex-direction: column; }
.gallery { height: 120px; flex: none; display: flex; padding-top: 3px; }
.gl { width: 133px; padding: 5px 0 0 8px; }
.shield { width: 22px; height: 22px; border-radius: 5px; background: #222; display: grid; place-items: center; }
.tiles { width: 1052px; display: flex; gap: 4px; }
.tile { flex: 1; height: 117px; background: #1a1a1a; display: flex; flex-direction: column; align-items: flex-start; justify-content: space-between; }
.big { align-self: stretch; height: 93px; padding-top: 23px; display: flex; align-items: center; justify-content: center; color: #fff; font-weight: 700; font-size: 16px; }
.small { height: 24px; background: #111; color: #fff; font-size: 12px; display: flex; align-items: center; gap: 3px; padding: 0 5px 0 1px; }
.nextbtn { margin-left: 10px; width: 32px; height: 114px; background: #242424; border-radius: 4px; display: grid; place-items: center; padding-left: 7px; }
.viewbtn { margin: 10px 0 0 26px; width: 58px; height: 22px; border-radius: 8px; background: #222; color: #b5b5b5; font-size: 12px; display: flex; align-items: center; padding-left: 8px; gap: 4px; }

.share { width: 913px; height: 485px; flex: none; margin-left: 203px; border: 3px solid #4cc404; position: relative; display: flex; flex-direction: column; background: #e6e6e8; color: #444; font-size: 8.7px; }
.banner { position: absolute; z-index: 3; left: 239px; top: -3px; height: 24px; display: flex; border-radius: 0 0 4px 4px; overflow: hidden; font-size: 16px; }
.viewing { width: 304px; background: #23d959; color: #20402b; display: flex; align-items: center; padding-left: 10px; gap: 5px; }
.opts { width: 125px; background: #222326; color: #fff; display: flex; align-items: center; padding-left: 7px; gap: 5px; font-size: 15.5px; }
.phead { background: #b7472a; height: 37px; flex: none; position: relative; }
.circuit { position: absolute; left: 632px; top: 0; width: 275px; height: 37px; overflow: hidden; }
.ptitle { height: 20px; display: flex; align-items: center; padding: 0 10px 3px 10px; position: relative; }
.q1 { margin-left: 20px; } .q2 { margin-left: 6px; } .q3 { margin-left: 13px; } .q4 { margin-left: 22px; } .q5 { margin-left: 24px; }
.failed { margin-left: 518px; color: #e7a796; }
.pwin { margin-left: auto; display: flex; gap: 24px; }
.ptabs { height: 17px; display: flex; align-items: center; color: #fbe5df; padding-top: 1px; position: relative; }
.ptab { height: 16px; padding: 0 7px; display: flex; align-items: center; }
.ptab.file { padding: 0 18px 0 12px; }
.ptab.on { background: #f1eff1; color: #c04a2c; padding: 0 7px 0 6px; font-weight: 600; }
.ptab.ctx { background: #983b24; margin-left: 1px; padding: 0 13px; color: #fff; }
.bulb { margin-left: 8px; }
.tell { margin-left: 4px; color: #efb5a6; }
.pshare { margin-left: auto; width: 50px; height: 16px; background: #963a23; display: flex; align-items: center; gap: 5px; padding-left: 4px; color: #fff; }

.ribbon { height: 63px; flex: none; background: #f1eff1; border-bottom: 1px solid #d4d2d4; display: flex; padding-top: 1px; }
.group { display: flex; flex-direction: column; border-right: 1px solid #dad8da; height: 60px; flex: none; }
.gb { height: 51px; flex: none; display: flex; }
.up1 { margin-top: -1px; }
.gn { height: 11px; display: flex; align-items: center; justify-content: center; font-size: 8px; color: #666; }
.gn .ic { margin-right: 2px; }
.gn span { margin: 0 auto; }
.bigcmd { display: flex; flex-direction: column; align-items: center; padding-top: 3px; }
.bigcmd > span { margin-top: 3px; height: 10px; }
.bigcmd em { display: flex; align-items: center; gap: 2px; margin-top: 1px; }
.bc { margin-top: 5px; }
.pst { color: #a09da2; }
.cmds { padding-top: 2px; }
.cmds p { height: 15.5px; display: flex; align-items: center; gap: 1px; }
.cmds p .ic:nth-child(3) { margin-left: 2px; }
.cmds.tight { padding-top: 1px; } .cmds.tight p { height: 15px; }
.off { color: #aaa7ac; }
.g1 { width: 101px; } .g1 .bigcmd { width: 24px; margin-right: 4px; padding-left: 2px; } .g1 .gn { padding-right: 4px; } .g1 .gn span { margin-left: 27px; } .g1 .gn .ic { margin-right: -3px; }
.g2 { width: 83px; } .g2 .bigcmd { width: 26px; margin: 0 2px 0 2px; } .g2 .cmds { margin-left: 1px; }
.g3 { width: 142px; }
.g4 { width: 204px; }
.g5 { width: 242px; padding-left: 1px; } .g5 .shapes { margin-top: 3px; } .g5 .bigcmd { width: 32px; } .g5 .qk { margin: 0 0 0 1px; width: 31px; }
.g6 { width: 56px; padding-left: 1px; } .g6 .cmds { padding-left: 1px; }
.collapse { margin: 54px 3px 0 auto; }

.work { height: 366px; flex: none; display: flex; }
.panel { width: 134px; background: #e7e6e8; display: flex; position: relative; border-top: 1px solid #ddd; }
.thumbs { width: 119px; height: 365px; overflow: hidden; padding-top: 14px; }
.thumb { height: 64.7px; display: flex; font-size: 11px; color: #666; }
.thumb span { margin-right: 5px; margin-top: -1px; }
.thumb .ic { background: #fff; outline: 1px solid #cfcfd1; overflow: hidden; }
.thumb.sel { color: #d9593a; } .thumb.sel .ic { outline: 1.5px solid #ea6f51; }
.vbar { width: 12px; display: flex; flex-direction: column; background: #dcdadc; }
.btn { width: 12px; height: 11px; flex: none; background: #fff; display: grid; place-items: center; }
.knob { background: #fff; border: 1px solid #b0b0b2; flex: none; }
.vbar .knob { height: 93px; margin: 173px 0 77px; }
.split { position: absolute; left: 127px; top: 298px; z-index: 2; }
.editor { width: 773px; display: flex; flex-direction: column; border-left: 1px solid #c9c9cb; }
.canvasrow { height: 328px; display: flex; flex: none; }
.slide { width: 764px; background: #fff; position: relative; overflow: hidden; }
.text { padding: 20px 0 0 21px; font-size: 10.1px; color: #1c1c1c; }
.text p { height: 21.15px; display: flex; align-items: center; white-space: pre; }
.text p > i { width: 7px; flex: none; }
.text .a > i { width: 13px; } .text .eg > i { width: 15px; } .text .c > i { width: 6px; }
.frame { position: absolute; left: 14px; top: -20px; width: 731px; height: 334px; border: 1px dashed #b8b8b8; }
.frame i { position: absolute; width: 8px; height: 8px; border: 1.5px solid #8c8c8c; border-radius: 50%; background: #fff; }
.h1 { left: -4px; top: 163px; } .h2 { right: -4px; top: 163px; } .h3 { left: -4px; bottom: -4px; } .h4 { left: 360px; bottom: -4px; } .frame .h5 { right: -4px; bottom: -4px; background: none; }
.logo { position: absolute; left: 677px; top: 297px; display: flex; flex-direction: column; white-space: nowrap; }
.logo strong { font: 800 19px/20px "Open Sans"; color: #222; height: 20px; transform: scaleY(1.15); }
.logo strong b { color: #ee1730; }
.logo span { font-family: Lato, sans-serif; font-size: 10.3px; line-height: 10px; color: #333; }
.pointer { position: absolute; left: 194px; top: 154px; }
.rbar { width: 9px; background: #dcdadc; display: flex; flex-direction: column; }
.rbar .btn { width: 9px; } .rbar .knob { height: 13px; margin: 147px 0 122px; border: 0; } .rbar .pg { background: #e6e6e8; height: 12px; }
.hbar { height: 14px; flex: none; background: #dcdadc; display: flex; width: 764px; border-top: 1px solid #b5b5b7; }
.hbar .btn { height: 13px; } .hbar .knob { width: 661px; margin: 0 40px 0 38px; border-width: 0 1px; }
.notes { flex: 1; border-top: 1px solid #cfcfd1; margin-top: 1px; display: flex; align-items: center; padding: 0 0 2px 6px; font-size: 10.5px; color: #666; }
.status { height: 13px; flex: none; background: #f1eff1; border-top: 1px solid #cfcdcf; display: flex; align-items: center; padding-top: 2px; font-size: 7.8px; color: #666; }
.s1 { margin-left: 10px; } .s2 { margin-left: 8px; }
.sright { margin-left: auto; width: 315px; display: flex; align-items: center; gap: 2px; }
.s3 { margin-left: 10px; }
.views { display: flex; margin-left: 8px; } .views i { width: 21px; height: 11px; display: grid; place-items: center; } .views .on { background: #cfcdcf; }
.zoomer { display: flex; align-items: center; gap: 3px; margin-left: -1px; } .zoomer b { font-size: 11px; line-height: 9px; width: 7px; text-align: center; }
.track { width: 69px; height: 1px; background: #bbb; display: flex; justify-content: center; align-items: center; } .track i { width: 3px; height: 8px; background: #666; flex: none; }
.pct { margin-left: 5px; } .fw { margin-left: 4px; }

.controls { height: 52px; flex: none; background: #000; position: relative; display: flex; color: #a0a0a0; font-size: 12px; }
.ctl { display: flex; flex-direction: column; align-items: center; justify-content: flex-end; height: 45px; gap: 5px; width: 80px; flex: none; position: relative; }
.ctl > .ic:first-child { margin-bottom: auto; margin-top: 6px; }
.ctl.mute { width: 90px; height: 48px; margin-top: 1px; border: 1px solid #fff; border-radius: 8px; background: #1a1a1a; color: #b0b0b0; padding-bottom: 3px; }
.ctl.mute > .ic:first-child { margin-top: 2px; }
.cv { position: absolute; right: 5px; top: 9px; }
.c5 .cv { right: 6px; top: 10px; }
.c2 { width: 90px; } .ctl.c2 > .ic:first-child { margin-top: 3px; }
.c3 { width: 90px; margin-left: 273px; }
.pp { display: flex; margin: 6px 0 auto 14px; gap: 1px; } .pp b { font-weight: 400; color: #ccc; font-size: 11.5px; width: 14px; }
.c4 { width: 98px; color: #23d959; } .ctl.c4 > .ic:first-child { margin-top: 7px; }
.c5 { margin-left: -1px; } .ctl.c5 > .ic:first-child { margin-top: 6px; }
.ctl.c6 > .ic:first-child { margin-top: 5px; } .ctl.c8 > .ic:first-child { margin-top: 14px; }
.leave { margin: 12px 16px 0 auto; width: 70px; height: 28px; border: 0; border-radius: 8px; background: #e02828; color: #fff; font: 700 13px/1 "Open Sans"; display: grid; place-items: center; padding: 0; }

.side { width: 47px; background: #f7f7f7; border-left: 1px solid #c2c6c2; display: flex; flex-direction: column; align-items: center; padding-top: 1px; }
.sic { height: 42px; display: grid; place-items: center; }
.sic.add { margin-top: 4px; }
.sfoot { margin-top: auto; width: 28px; border-top: 1px solid #bbb; padding: 3px 0 1px; }

.taskbar { height: 40px; flex: none; display: flex; background: linear-gradient(90deg, #203840, #22373f 40%, #1f3044 68%, #1b2842); }
.start { width: 48px; display: grid; place-items: center; }
.searchbox { width: 344px; background: #f1f1f1; border: 1px solid #b9b9b9; display: flex; align-items: center; padding-left: 11px; font-size: 14.5px; color: #333; }
.searchbox span { margin-left: 11px; }
.cake { margin: 0 6px 0 auto; }
.tb { width: 48px; display: grid; place-items: center; flex: none; }
.app { width: 49.1px; position: relative; }
.tb + .app.active { margin-left: 3px; width: 48px; background: #4c5f67; }
.app.run::after { content: ""; position: absolute; left: 5px; right: 4px; bottom: 0; height: 2px; background: #76b9ed; }
.app.run.active::after { left: 0; right: 0; }
.tray { margin-left: auto; width: 369px; display: flex; align-items: center; color: #fff; font-size: 12px; }
.deg { margin-left: 8px; font-size: 13.5px; }
.t1 { margin-left: 18px; } .t2 { margin-left: 11px; } .t3 { margin-left: 11px; } .t4 { margin-left: 10px; } .t5 { margin-left: 10px; } .t6 { margin-left: 6px; }
.two { display: flex; flex-direction: column; align-items: center; gap: 6px; flex: none; }
.lang { margin-left: 10px; } .time { margin-left: 13px; }
.act { margin-left: 16px; position: relative; }
.act b { position: absolute; left: 6px; top: 7px; width: 19px; height: 16px; border-radius: 8px; background: #333c4a; border: 1px solid #99a; display: grid; place-items: center; font-size: 11px; font-weight: 600; }
</style>
